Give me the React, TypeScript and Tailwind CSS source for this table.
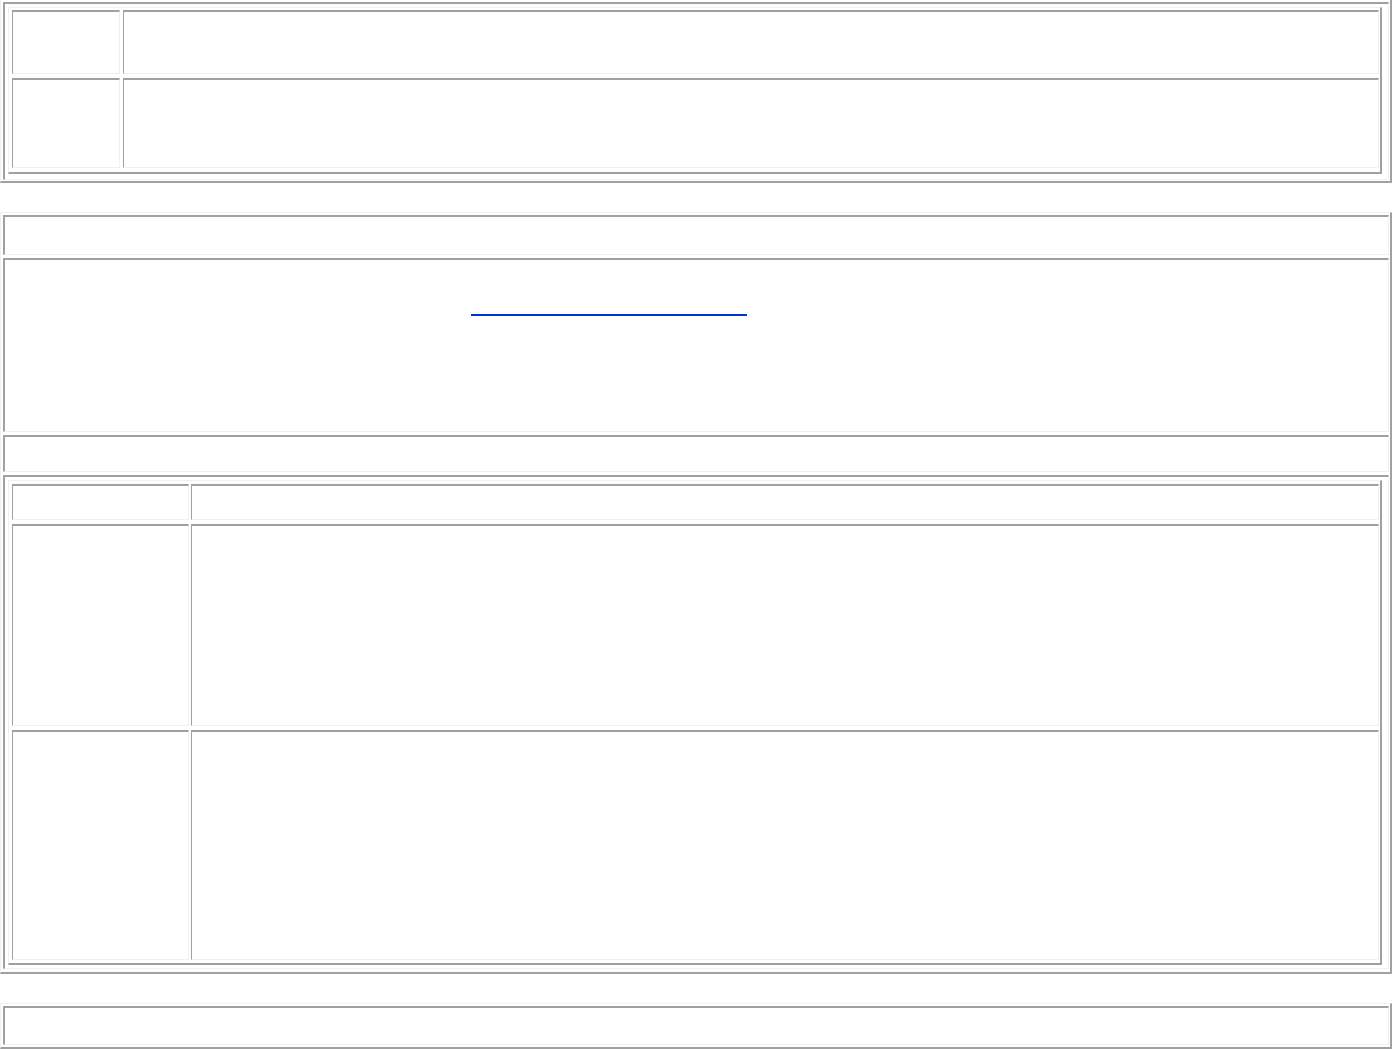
import type { ReactNode } from "react";

// raised frame around a table (light top/left, shaded bottom/right)
function Frame({ className, children }: { className: string; children: ReactNode }) {
  return (
    <div
      className={`border-t border-l border-r-2 border-b-2 border-t-[#f0f0f0] border-l-[#f0f0f0] border-r-[#a0a0a0] border-b-[#a0a0a0] ${className}`}
    >
      {children}
    </div>
  );
}

// sunken cell (shaded top/left, light bottom/right)
function Cell({ className, children }: { className: string; children?: ReactNode }) {
  return (
    <div
      className={`border-t-2 border-l-2 border-r border-b border-t-[#a0a0a0] border-l-[#a0a0a0] border-r-[#f0f0f0] border-b-[#f0f0f0] ${className}`}
    >
      {children}
    </div>
  );
}

function InnerCell({ className }: { className: string }) {
  return (
    <div
      className={`border-t-2 border-l border-r border-b border-t-[#a0a0a0] border-l-[#a0a0a0] border-r-[#f0f0f0] border-b-[#f0f0f0] ${className}`}
    />
  );
}

export default function App() {
  return (
    <div className="w-[1392px] bg-white font-['Liberation_Serif',serif] text-black">
      {/* first table, top edge scrolled off */}
      <Frame className="-mt-px pt-[2px] pl-[2px] pr-px pb-px">
        <Cell className="h-[178px] pt-[3px] pl-[3px] pr-[6px] pb-[5px]">
          <Frame className="pt-[2px] pl-[3px] pr-px pb-[4px]">
            <div className="grid grid-cols-[108px_1256px] gap-x-[3px] gap-y-[4px]">
              <InnerCell className="h-[64px]" />
              <InnerCell className="h-[64px]" />
              <InnerCell className="h-[90px]" />
              <InnerCell className="h-[90px]" />
            </div>
          </Frame>
        </Cell>
      </Frame>

      {/* second table */}
      <Frame className="mt-[29px] pt-[2px] pl-[2px] pr-px pb-[3px]">
        <div className="flex flex-col gap-[3px]">
          <Cell className="h-[40px]" />
          <Cell className="h-[174px] pl-[466px] pt-[54px]">
            <a href="#" className="block w-[276px] h-[2px] bg-[#0033cc]" />
          </Cell>
          <Cell className="h-[37px]" />
          <Cell className="h-[494px] pt-[3px] pl-[3px] pr-[6px] pb-[3px]">
            <Frame className="pt-[3px] pl-[3px] pr-px pb-[3px]">
              <div className="grid grid-cols-[177px_1188px] gap-x-[2px] gap-y-[4px]">
                <InnerCell className="h-[36px]" />
                <InnerCell className="h-[36px]" />
                <InnerCell className="h-[202px]" />
                <InnerCell className="h-[202px]" />
                <InnerCell className="h-[230px]" />
                <InnerCell className="h-[230px]" />
              </div>
            </Frame>
          </Cell>
        </div>
      </Frame>

      {/* third table */}
      <Frame className="mt-[29px] pt-[2px] pl-[2px] pr-px pb-[2px]">
        <Cell className="h-[39px]" />
      </Frame>
    </div>
  );
}
